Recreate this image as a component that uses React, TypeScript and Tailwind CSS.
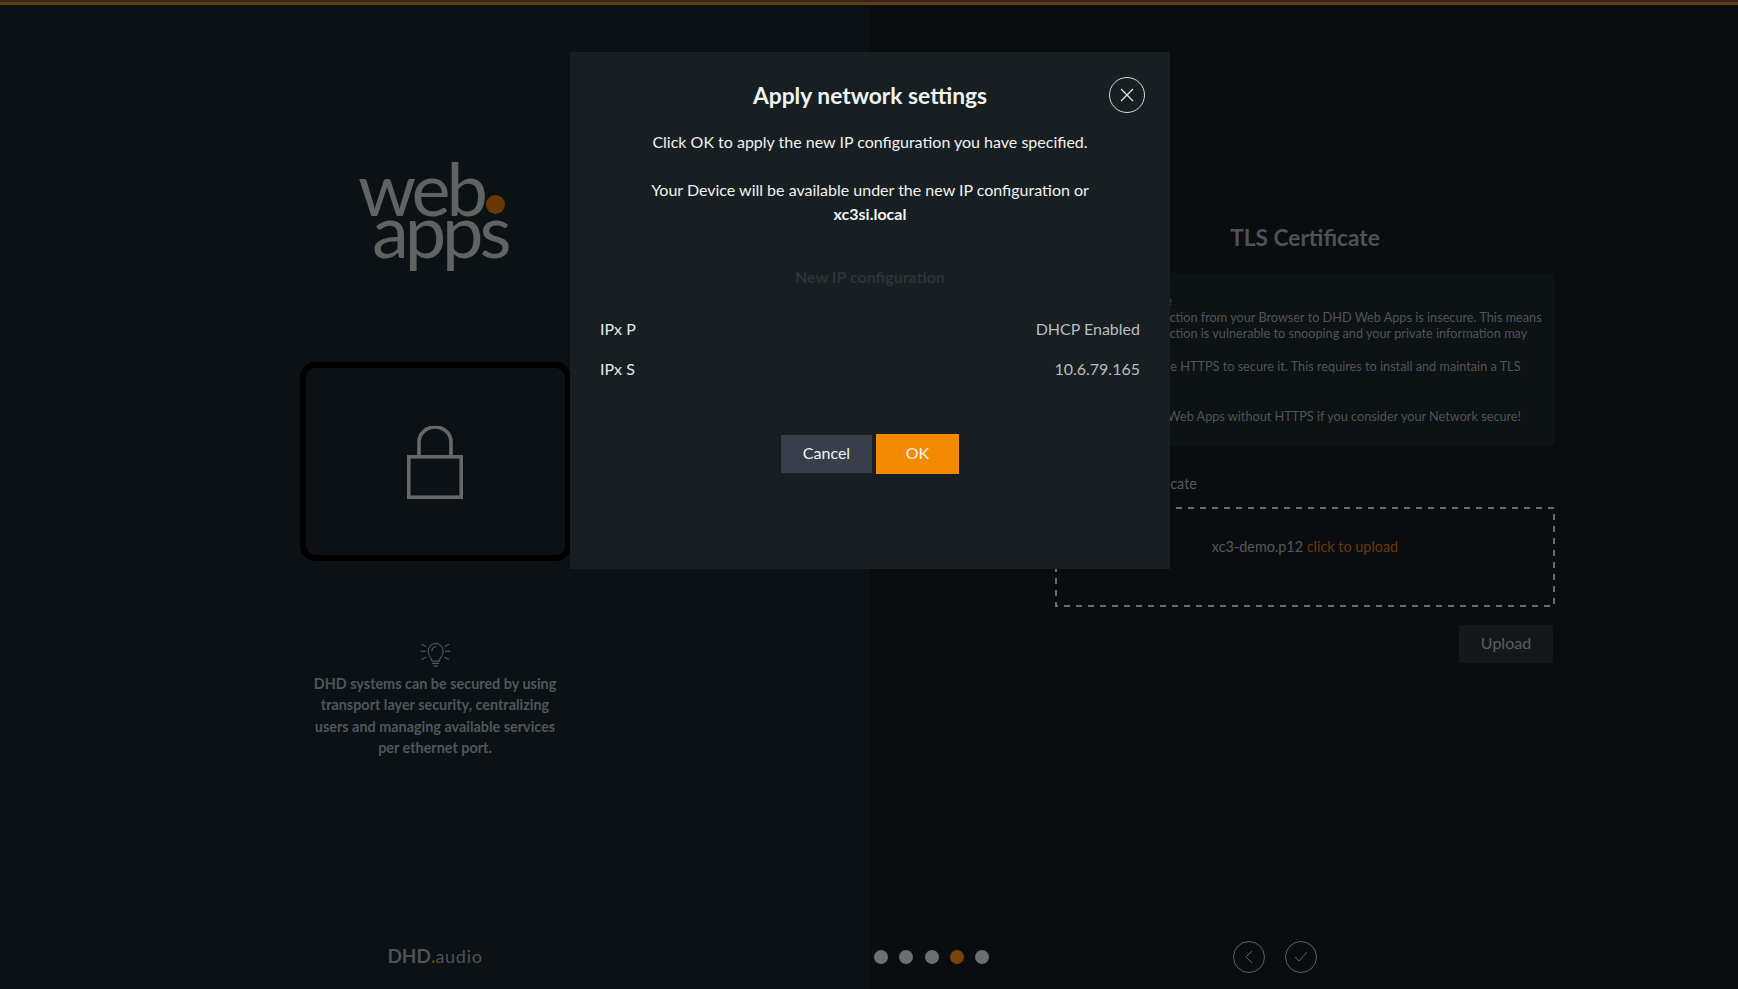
const lato = { fontFamily: "Lato, 'Noto Sans', sans-serif" };

function LockIcon() {
  return (
    <svg width="60" height="76" viewBox="0 0 60 76" fill="none" stroke="#646868" strokeWidth="3.6">
      <path d="M14 30V16a16 15 0 0 1 32 0V30" />
      <rect x="3.8" y="30.8" width="52.4" height="40.4" />
    </svg>
  );
}

function BulbIcon() {
  return (
    <svg width="33" height="27" viewBox="385 65 100 80" fill="none" stroke="#5f6467" strokeWidth="3">
      <path d="M393 71l14 7M390 92h15M393 117l14-7M476 71l-14 7M479 92h-15M476 117l-14-7" />
      <path d="M424 122c0-10-11-14-11-31a22 22 0 0 1 45 0c0 17-11 21-11 31z" />
      <path d="M424 91c0-8 6-13 13-13" />
      <path d="M425 129h21M429 137h13" />
    </svg>
  );
}

function Dot({ active }: { active?: boolean }) {
  return <div className={active ? "w-[14px] h-[14px] rounded-full bg-[#7a4309]" : "w-[14px] h-[14px] rounded-full bg-[#6c6f6f]"} />;
}

export default function App() {
  return (
    <div className="relative h-screen w-full overflow-hidden flex flex-col bg-[#0a0d0f]" style={lato}>
      <div className="h-[2px] bg-[#2b292c]" />
      <div className="h-[3px] bg-[#6b3a06]" />

      <div className="flex flex-1">
        {/* left side */}
        <div className="w-[870px] bg-[#0b1114] flex flex-col items-center">
          <div className="relative mt-[141px] w-[160px] h-[126px] text-[#5f6362] text-[74px] leading-[39px] tracking-[-0.055em]">
            <div className="pl-[3px] pt-[22px]">web</div>
            <div className="pl-[17px] mt-[3px]">apps</div>
            <div className="absolute left-[131px] top-[49px] w-[19px] h-[19px] rounded-full bg-[#6a3805]" />
          </div>
          <div className="mt-[90px] w-[271px] h-[199px] border-[6px] border-black rounded-[15px] pt-[4px] flex items-center justify-center">
            <LockIcon />
          </div>
          <div className="mt-[81px]">
            <BulbIcon />
          </div>
          <p className="mt-[3.5px] w-[260px] text-center text-[14.4px] leading-[21.5px] font-bold text-[#50575b]">
            DHD systems can be secured by using transport layer security, centralizing users and managing available services per ethernet port.
          </p>
          <div className="mt-[183.5px] flex items-baseline text-[#505355]">
            <span className="text-[19px] font-bold">DHD</span>
            <span className="text-[19px] font-bold text-[#6a3805]">.</span>
            <span className="text-[18px] tracking-[0.04em]">audio</span>
          </div>
        </div>

        {/* right side */}
        <div className="flex-1 pl-[2px] flex flex-col items-center">
          <h2 className="mt-[219px] text-[22.7px] leading-[28px] font-bold text-[#4e5254]">TLS Certificate</h2>
          <div className="mt-[21px] w-[500px] h-[173px] rounded bg-[#0d1215] pt-[19px] pl-[56px] pr-[10px] text-[12.7px] leading-[16.6px] text-[#4f5558]">
            <div>Not secure</div>
            <div>The connection from your Browser to DHD Web Apps is insecure. This means</div>
            <div>The connection is vulnerable to snooping and your private information may</div>
            <div>be stolen.</div>
            <div>You can use HTTPS to secure it. This requires to install and maintain a TLS</div>
            <div>certificate</div>
            <div className="mt-[16.6px]">Use DHD Web Apps without HTTPS if you consider your Network secure!</div>
          </div>
          <div className="mt-[28px] w-[500px] text-[14.4px] leading-[20px] text-[#54595c]">Upload TLS Certificate</div>
          <div className="relative mt-[13px] w-[500px] h-[100px] pt-[30px] text-center text-[14.4px] leading-[20px] text-[#54595c]">
            <svg className="absolute inset-0" width="500" height="100" fill="none" stroke="#686b6b" strokeWidth="2" strokeDasharray="6 6">
              <rect x="1" y="1" width="498" height="98" />
            </svg>
            xc3-demo.p12 <span className="text-[#6a3805]">click to upload</span>
          </div>
          <div className="mt-[18px] w-[500px] flex justify-end">
            <button className="w-[94px] h-[38px] mr-[2px] pb-[2px] bg-[#14181b] text-[16px] text-[#5a5f62]">Upload</button>
          </div>
          <div className="mt-[278px] w-full pl-[361px] flex gap-[20px]">
            <div className="w-[32px] h-[32px] rounded-full border border-[#5d6061] flex items-center justify-center">
              <svg width="10" height="14" viewBox="0 0 10 14" fill="none" stroke="#5d6061"><path d="M8 1L2 7l6 6" /></svg>
            </div>
            <div className="w-[32px] h-[32px] rounded-full border border-[#5d6061] flex items-center justify-center">
              <svg width="14" height="12" viewBox="0 0 14 12" fill="none" stroke="#5d6061"><path d="M1 6l4 4 8-9" /></svg>
            </div>
          </div>
        </div>
      </div>

      {/* pager dots */}
      <div className="absolute left-[874px] top-[950px] flex gap-[11.25px]">
        <Dot />
        <Dot />
        <Dot />
        <Dot active />
        <Dot />
      </div>

      {/* dialog */}
      <div className="absolute left-[570px] top-[52px] w-[600px] h-[517px] bg-[#171f22] px-[30px] text-center text-[16px] leading-[24px] text-[#f0f2f2]">
        <button className="absolute right-[25px] top-[25px] w-[36px] h-[36px] rounded-full border border-[#d8dada] flex items-center justify-center">
          <svg width="14" height="14" viewBox="0 0 14 14" fill="none" stroke="#e8eaea" strokeWidth="1.2"><path d="M1 1l12 12M13 1L1 13" /></svg>
        </button>
        <h2 className="pt-[28px] text-[22.8px] leading-[30px] font-bold">Apply network settings</h2>
        <p className="mt-[20px]">Click OK to apply the new IP configuration you have specified.</p>
        <p className="mt-[24px]">Your Device will be available under the new IP configuration or</p>
        <p className="font-bold">xc3si.local</p>
        <p className="mt-[39px] font-bold text-[#2c3437]">New IP configuration</p>
        <div className="mt-[28px] flex justify-between">
          <span className="text-[#e6e8e8]">IPx P</span>
          <span className="text-[#b7bec1]">DHCP Enabled</span>
        </div>
        <div className="mt-[16px] flex justify-between">
          <span className="text-[#e6e8e8]">IPx S</span>
          <span className="text-[#b7bec1]">10.6.79.165</span>
        </div>
        <div className="mt-[53px] flex justify-center items-center gap-[4px]">
          <button className="w-[91px] h-[38px] pb-[2px] bg-[#383f4a]">Cancel</button>
          <button className="w-[83px] h-[40px] pb-[2px] bg-[#f38a00]">OK</button>
        </div>
      </div>
    </div>
  );
}
